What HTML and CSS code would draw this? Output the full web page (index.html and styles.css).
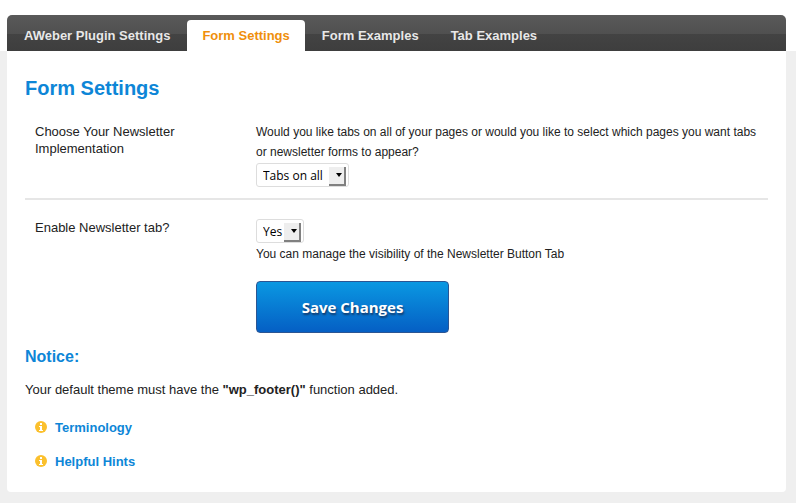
FILE: index.html
```html
<!DOCTYPE html>
<html lang="en">
<head>
<meta charset="utf-8">
<title>Form Settings</title>
<link rel="stylesheet" href="styles.css">
</head>
<body>
<header class="top">
  <nav class="tabs">
    <a class="tab" href="#plugin">AWeber Plugin Settings</a>
    <a class="tab tab-active" href="#form" aria-current="page">Form Settings</a>
    <a class="tab" href="#form-examples">Form Examples</a>
    <a class="tab" href="#tab-examples">Tab Examples</a>
  </nav>
</header>
<main class="panel">
  <h1 class="title">Form Settings</h1>
  <form class="settings">
    <div class="row row-ruled">
      <label class="label" for="implementation">Choose Your Newsletter Implementation</label>
      <div class="field">
        <p class="hint">Would you like tabs on all of your pages or would you like to select which pages you want tabs or newsletter forms to appear?</p>
        <span class="select">
          <select class="select-box select-wide" id="implementation"><option>Tabs on all</option><option>Select pages</option></select>
        </span>
      </div>
    </div>
    <div class="row">
      <label class="label" for="enable">Enable Newsletter tab?</label>
      <div class="field">
        <span class="select">
          <select class="select-box select-narrow" id="enable"><option>Yes</option><option>No</option></select>
        </span>
        <p class="hint">You can manage the visibility of the Newsletter Button Tab</p>
        <button class="save" type="button">Save Changes</button>
      </div>
    </div>
  </form>
  <h2 class="notice">Notice:</h2>
  <p class="text">Your default theme must have the <strong>"wp_footer()"</strong> function added.</p>
  <ul class="links">
    <li class="item">
      <svg class="info" viewBox="0 0 12 12" aria-hidden="true"><circle cx="6" cy="6" r="6" fill="#fbc02d"/><path d="M5 2h2v2H5zM4 5h3v4h1v1H4V9h1V6H4z" fill="#fff"/></svg>
      <a class="link" href="#terminology">Terminology</a>
    </li>
    <li class="item">
      <svg class="info" viewBox="0 0 12 12" aria-hidden="true"><circle cx="6" cy="6" r="6" fill="#fbc02d"/><path d="M5 2h2v2H5zM4 5h3v4h1v1H4V9h1V6H4z" fill="#fff"/></svg>
      <a class="link" href="#hints">Helpful Hints</a>
    </li>
  </ul>
</main>
</body>
</html>
```

FILE: styles.css
```css
* {
  box-sizing: border-box;
}

body {
  margin: 0;
  background: #efefef;
  color: #222;
  font-family: "Liberation Sans", Arial, sans-serif;
  font-size: 13px;
}

h1, h2, p, ul {
  margin: 0;
  padding: 0;
}

.top {
  padding: 15px 10px 0 7px;
  background: #fff;
}

.tabs {
  display: flex;
  gap: 2px;
  height: 36px;
  padding: 5px 2px 0;
  border-radius: 5px 5px 0 0;
  background: linear-gradient(#595959 0, #505050 19px, #434343 19px, #3e3e3e 100%);
}

.tab {
  padding: 0 15px;
  border-radius: 4px 4px 0 0;
  color: #e8e8e8;
  font-size: 13px;
  font-weight: bold;
  line-height: 31px;
  text-decoration: none;
}

.tab-active {
  background: #fff;
  color: #ef8f0c;
}

.panel {
  margin: 0 10px 0 7px;
  padding: 24px 18px 14px;
  border-radius: 0 0 4px 4px;
  background: #fff;
}

.title {
  color: #0d86d7;
  font-size: 20px;
  line-height: 26px;
}

.row {
  display: grid;
  grid-template-columns: 221px 1fr;
  padding: 18px 10px 12px;
}

.row-ruled {
  padding: 21px 10px 10px;
  border-bottom: 2px solid #e6e6e6;
}

.label {
  width: 160px;
  padding-top: 1px;
  font-size: 13px;
  line-height: 17px;
}

.hint {
  font-size: 12px;
  line-height: 20px;
}

.select {
  display: block;
  position: relative;
  width: max-content;
  margin: 1px 0;
}

.select::before {
  content: "";
  position: absolute;
  top: 4px;
  right: 3px;
  width: 15px;
  height: 17px;
  border-right: 2px solid #808080;
  border-bottom: 2px solid #808080;
  background: #eee;
  pointer-events: none;
}

.select::after {
  content: "";
  position: absolute;
  top: 10px;
  right: 7px;
  border: 3px solid transparent;
  border-top: 4px solid #000;
  border-bottom: 0;
  pointer-events: none;
}

.select-box {
  display: block;
  height: 24px;
  padding: 0 6px;
  border: 1px solid #ddd;
  border-radius: 3px;
  appearance: none;
  background: #fff;
  color: #000;
  font-family: "Open Sans", sans-serif;
  font-size: 12px;
}

.select-wide {
  width: 93px;
}

.select-narrow {
  width: 48px;
}

.save {
  display: block;
  width: 193px;
  height: 52px;
  margin-top: 17px;
  border: 1px solid #2b5593;
  border-radius: 4px;
  background: linear-gradient(#0a98e2, #055fc4);
  color: #fff;
  font-family: "Open Sans", sans-serif;
  font-size: 15px;
  font-weight: bold;
  text-shadow: 1px 2px 2px #123a6b;
}

.notice {
  color: #0d86d7;
  font-size: 16px;
  line-height: 24px;
}

.text {
  margin-top: 10px;
  line-height: 22px;
}

.links {
  margin-top: 9px;
  padding-left: 10px;
  list-style: none;
}

.item {
  display: flex;
  align-items: center;
  gap: 8px;
  height: 34px;
}

.info {
  width: 12px;
  height: 12px;
}

.link {
  color: #0d86d7;
  font-size: 13px;
  font-weight: bold;
  text-decoration: none;
}
```
